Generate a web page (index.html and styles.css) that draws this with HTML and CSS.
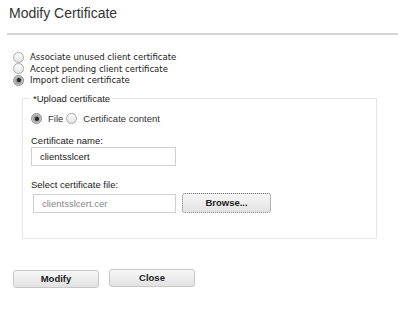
FILE: index.html
```html
<!DOCTYPE html>
<html>
<head>
<meta charset="utf-8">
<link rel="stylesheet" href="styles.css">
</head>
<body>
<div class="dialog">
  <h1 class="title">Modify Certificate</h1>
  <div class="divider"></div>
  <div class="options">
    <div class="opt"><span class="radio"></span><span>Associate unused client certificate</span></div>
    <div class="opt"><span class="radio"></span><span>Accept pending client certificate</span></div>
    <div class="opt"><span class="radio checked"></span><span>Import client certificate</span></div>
  </div>
  <div class="fieldset">
    <div class="legend">*Upload certificate</div>
    <div class="src">
      <span class="radio checked"></span><span class="src-label">File</span>
      <span class="radio"></span><span class="src-label">Certificate content</span>
    </div>
    <div class="label">Certificate name:</div>
    <div class="input">clientsslcert</div>
    <div class="label label2">Select certificate file:</div>
    <div class="filerow">
      <div class="input disabled">clientsslcert.cer</div>
      <div class="btn browse">Browse...</div>
    </div>
  </div>
  <div class="actions">
    <div class="btn action">Modify</div>
    <div class="btn action close">Close</div>
  </div>
</div>
</body>
</html>
```
FILE: styles.css
```css
html, body {
  margin: 0;
  padding: 0;
  background: #fff;
}
.dialog {
  width: 398px;
  height: 320px;
  font-family: "Liberation Sans", Arial, sans-serif;
  color: #222;
}
.title {
  margin: 0;
  padding: 5px 0 0 9px;
  height: 28px;
  font-size: 14px;
  font-weight: normal;
  line-height: 16px;
  color: #333;
}
.divider {
  margin-left: 7px;
  height: 2px;
  background: #d4d4d4;
}
.options {
  padding: 17px 0 0 13px;
  display: flex;
  flex-direction: column;
  gap: 1px;
}
.opt {
  display: flex;
  align-items: center;
  gap: 6px;
  height: 10.5px;
  font-family: "DejaVu Sans", Verdana, sans-serif;
  font-size: 8.5px;
  color: #222;
}
.radio {
  width: 9px;
  height: 9px;
  border-radius: 50%;
  border: 1px solid #a9a9a9;
  background: linear-gradient(#fdfdfd, #e4e4e4);
  box-sizing: content-box;
  flex: none;
  position: relative;
}
.radio.checked::after {
  content: "";
  position: absolute;
  left: 2.5px;
  top: 2.5px;
  width: 4px;
  height: 4px;
  border-radius: 50%;
  background: #222;
}
.radio.checked {
  background: radial-gradient(circle, #555 0, #ccc 70%);
  border-color: #8a8a8a;
}
.fieldset {
  margin: 12px 0 0 22px;
  width: 355px;
  height: 141px;
  border: 1px solid #e6e6e6;
  position: relative;
  box-sizing: border-box;
  padding: 14px 0 0 8px;
  font-size: 9.5px;
}
.legend {
  position: absolute;
  top: -6px;
  left: 7px;
  padding: 0 2px 0 3px;
  background: #fff;
  font-size: 9.5px;
  line-height: 11px;
  color: #222;
}
.src {
  display: flex;
  align-items: center;
  height: 12px;
  color: #333;
}
.src .radio { margin-right: 6px; }
.src-label { margin-right: 3px; }
.label {
  margin-top: 10px;
  line-height: 11px;
  color: #222;
}
.label2 { margin-top: 13px; }
.input {
  margin-top: 1px;
  width: 145px;
  height: 19px;
  box-sizing: border-box;
  border: 1px solid #cfcfcf;
  padding-left: 8px;
  line-height: 17px;
  font-size: 9.5px;
  color: #222;
}
.filerow {
  display: flex;
  align-items: flex-end;
  gap: 6px;
  margin-top: 3px;
}
.filerow .input {
  margin-top: 0;
  width: 143px;
  margin-left: 2px;
}
.input.disabled { color: #888; }
.btn {
  box-sizing: border-box;
  border: 1px solid #c8c8c8;
  border-radius: 3px;
  background: linear-gradient(#f7f7f7, #e2e2e2);
  font-weight: bold;
  font-size: 9.5px;
  color: #222;
  display: flex;
  align-items: center;
  justify-content: center;
}
.browse {
  width: 89px;
  height: 20px;
  border: 1px dotted #777;
}
.actions {
  display: flex;
  gap: 10px;
  padding: 31px 0 0 13px;
  align-items: flex-start;
}
.action {
  width: 86px;
  height: 18px;
}
.close { margin-top: -1px; }
```
